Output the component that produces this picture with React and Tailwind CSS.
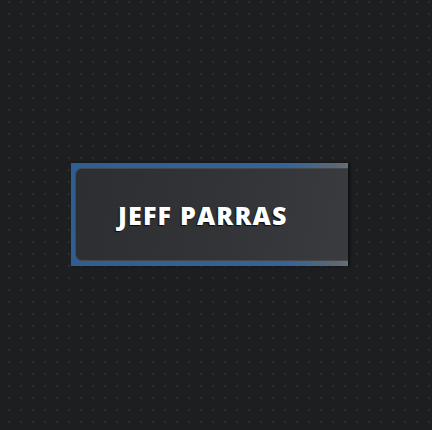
import React from "react";

export default function App() {
  return (
    <div className="min-h-[430px] w-full bg-[#1d1e20] bg-[radial-gradient(circle,#2c2d30_1px,transparent_1.2px)] bg-[length:12px_12px] bg-[position:3px_-4px] pt-[163px] pl-[71px]">
      <div className="w-[277px] h-[103px] pl-[4px] py-[5px] bg-[linear-gradient(90deg,#2f5e93_0%,#33659a_78%,#5b6672_95%,#66707a_100%)] shadow-[2px_0_3px_rgba(0,0,0,0.5)]">
        <div className="h-full rounded-l-[7px] border-t border-l border-b border-[#46484c] bg-[linear-gradient(100deg,#2c2e32_0%,#323438_55%,#3a3b3e_100%)] flex items-center pl-[42px]">
          <span
            className="text-white text-[25px] font-extrabold tracking-[1.2px] leading-none pt-[2px] [text-shadow:-1px_1px_1px_rgba(0,0,0,0.8)]"
            style={{ fontFamily: '"Open Sans", "Noto Sans", sans-serif' }}
          >
            JEFF PARRAS
          </span>
        </div>
      </div>
    </div>
  );
}
